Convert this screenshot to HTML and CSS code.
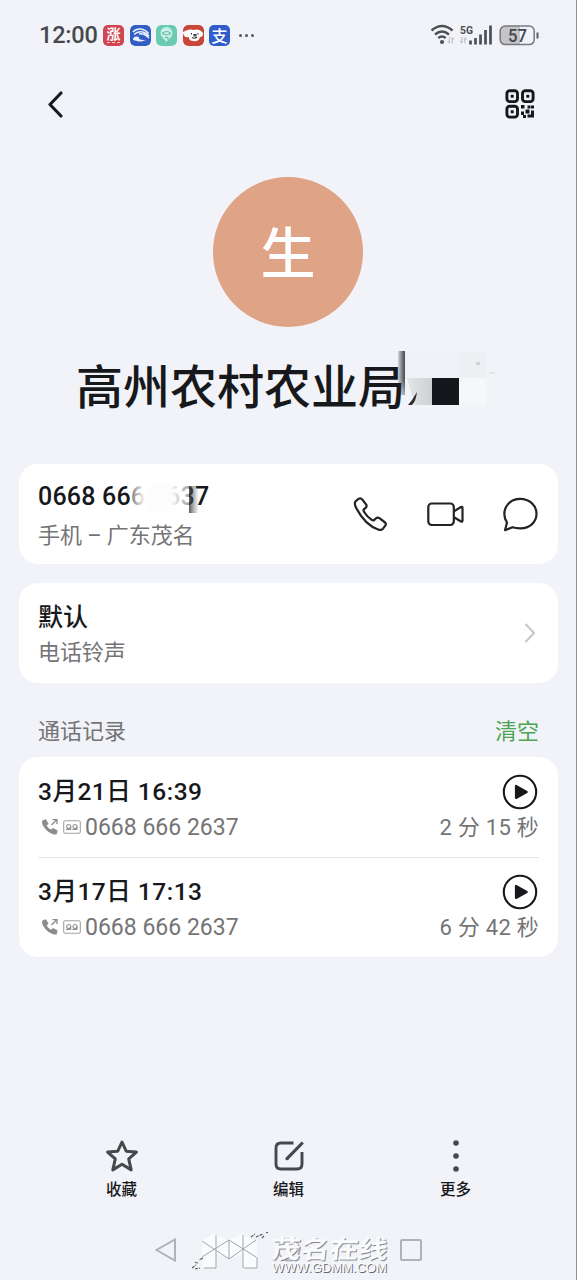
FILE: index.html
```html
<!DOCTYPE html>
<html lang="zh-CN">
<head>
<meta charset="utf-8">
<title>联系人</title>
<link rel="stylesheet" href="styles.css">
</head>
<body>
<svg class="defs" width="0" height="0">
  <symbol id="play" viewBox="0 0 36 36"><circle cx="18" cy="18" r="16.2" fill="none" stroke="#17181b" stroke-width="2.100"/><path d="M14 12v12L24.700 18z" fill="#17181b" stroke="#17181b" stroke-width="2.200" stroke-linejoin="round"/></symbol>
  <symbol id="outgoing" viewBox="0 0 18 18"><path d="M1.500 2.200 5 1.300l2.500 4.400-1.800 1.800c1 1.900 2.500 3.300 4.500 4.100l1.900-1.700 4.500 2.700-.8 3.400c-1 .9-3.800.8-6.800-1.200C5.300 12.400 1.800 8.600 1 4.700z" fill="#8c8c8e"/><path d="m10.500 7 5-5M11.500 1.700H16v4.400" fill="none" stroke="#8c8c8e" stroke-width="1.300"/></symbol>
  <symbol id="voicemail" viewBox="0 0 18 14"><rect x=".7" y=".7" width="16.600" height="12.600" rx="1.500" fill="none" stroke="#a2a2a4" stroke-width="1.100"/><g fill="none" stroke="#929294" stroke-width="1.100"><circle cx="5.700" cy="6.500" r="2"/><circle cx="12" cy="6.500" r="2"/><path d="M3 9.500h4.700V6.500M14 6.500v3h-4.700"/></g></symbol>
</svg>
<main class="screen">
  <header class="status">
    <span class="clock">12:00</span>
    <div class="apps">
      <span class="app red">涨<i></i></span>
      <svg class="app" viewBox="0 0 21 21"><rect width="21" height="21" rx="5" fill="#315dc5"/><path d="M3 7C7 2.500 14 3 18.500 8.500M4 9.500c4-4 10-4 15 1.500M9 9c4-1 7 1 10 4" fill="none" stroke="#e8f2ff" stroke-width="1.500"/><path d="M3 15q0-4 4-3.500 3 .5 2 2.500 3 1.500 7 1-5 2.500-9 1z" fill="#e8f2ff"/></svg>
      <svg class="app" viewBox="0 0 21 21"><rect width="21" height="21" rx="5" fill="#6bcbb2"/><path d="M10.500 17 6 12a6 6 0 1 1 9 0z" fill="#c9f0e5"/><path d="M6 8.500q4.500-4 9 0-4.500 3-9 0M9 12.500h3v3" fill="none" stroke="#5db9a1" stroke-width="1"/></svg>
      <svg class="app" viewBox="0 0 21 21"><rect width="21" height="21" rx="5" fill="#c94537"/><path d="M0 7C4 5 6 4 10 5c4-1 7-1 10 3 0 3-1 4-3 4-1 4-4 5-7 4-4 0-4-3-4-4-3 1-5 0-6-4z" fill="#fff"/><path d="M8.500 8v1.500M15 8v1.500M11 9.500h2V11h-2zM9 12.500q2.500 1.500 5-.2" fill="none" stroke="#333" stroke-width="1.100"/></svg>
      <span class="app blue">支</span>
      <span class="dots"><i></i><i></i><i></i></span>
    </div>
    <svg class="signal" width="112" height="26" viewBox="0 0 112 26">
      <g fill="none" stroke="#4d4f53" stroke-width="2.400"><path d="M3.500 8.500Q14-.5 24.500 8.500M7 12.500Q14 6.500 21 12.500M10.300 16q3.700-3 7.400 0"/></g><circle cx="14" cy="20" r="2.100" fill="#4d4f53"/>
      <path d="M21.500 15v6m0 0-1.700-2m4.500-3.500v6m0-6 1.600 2M34 15v6m0 0-1.700-2m4.500-3.500v6m0-6 1.600 2" fill="none" stroke="#c0c1c4" stroke-width="1.200"/>
      <text x="32" y="12" class="five" textLength="13" lengthAdjust="spacingAndGlyphs">5G</text>
      <path d="M42.500 22.500v-4M47.500 22.500v-6.500M52.500 22.500V12.500M57.500 22.500V8M62.500 22.500V3.500" stroke="#4d4f53" stroke-width="2.700"/>
      <rect x="72.200" y="4" width="34" height="18.600" rx="5" fill="#f1f3f8"/><path d="M77 4h15v18.600H77a5 5 0 0 1-5-5V9a5 5 0 0 1 5-5z" fill="#c3c5c9"/><rect x="72.200" y="4" width="34" height="18.600" rx="5" fill="none" stroke="#77797d" stroke-width="1.500"/><path d="M109.500 10.500v6" stroke="#5b5d61" stroke-width="2"/>
      <text x="80" y="19.700" class="charge" textLength="19" lengthAdjust="spacingAndGlyphs">57</text>
    </svg>
  </header>
  <nav class="topbar">
    <svg width="18" height="28" viewBox="0 0 18 28"><path d="M15 3 4 14.500l11 11.500" fill="none" stroke="#17181b" stroke-width="3.100" stroke-linecap="round" stroke-linejoin="round"/></svg>
    <svg width="30" height="30" viewBox="0 0 30 30"><g fill="none" stroke="#17181b" stroke-width="2.900"><rect x="1.900" y="1.800" width="10.600" height="10.800" rx="2.800"/><rect x="17.500" y="1.800" width="10.600" height="10.800" rx="2.800"/><rect x="1.900" y="17.300" width="10.600" height="10.800" rx="2.800"/></g><path d="M5.700 5.700h3v3h-3zM21.300 5.700h3v3h-3zM5.700 21.200h3v3h-3zM16 16h3.500v3.500H16zM20.500 20.500h4v4h-4zM26 16.500h3v3h-3zM16 22.500h3V26h-3zM22.500 16.500h3v3h-3zM26 21.500h3v7h-6.500v-3H26zM18 26h3v3h-3z" fill="#17181b"/></svg>
  </nav>
  <div class="avatar">生</div>
  <h1 class="name"><span>高州农村农业局</span><svg class="mosaic" width="98" height="58" viewBox="0 0 98 58"><defs><linearGradient id="edge"><stop stop-color="#17181b" stop-opacity="0"/><stop offset="1" stop-color="#45474a"/></linearGradient><linearGradient id="edgefade" x2="0" y2="1"><stop stop-color="#fff"/><stop offset=".5" stop-color="#fff"/><stop offset="1" stop-color="#fff" stop-opacity="0"/></linearGradient><mask id="fade"><rect width="98" height="58" fill="url(#edgefade)"/></mask><linearGradient id="patch"><stop stop-color="#e3e4e8"/><stop offset="1" stop-color="#cfd0d4"/></linearGradient></defs>
    <rect x="-1" y="1" width="8" height="44" fill="url(#edge)" mask="url(#fade)"/><path d="M7 1h54v27H7z" fill="#f0f1f6"/><path d="M9 28h25v27H17z" fill="url(#patch)"/><path d="m10 55 4-5 5-8q-1 9-5 13z" fill="#2c2e32"/><path d="M34 28h27v27H34z" fill="#14171c"/><path d="M61 2h27v26H61z" fill="#eeeff3"/><path d="M61 28h27v27H61z" fill="#f6f7f9"/><path d="M78 12h4v3h-4z" fill="#ced0d4"/><path d="M91 22h6v2h-6z" fill="#e4e5e9"/></svg></h1>
  <section class="card phone">
    <div class="info"><div class="number">0668 666 2637<svg class="veil" width="76" height="30" viewBox="0 0 76 30"><defs><linearGradient id="white"><stop stop-color="#fff" stop-opacity=".45"/><stop offset=".2" stop-color="#fff" stop-opacity=".9"/><stop offset=".32" stop-color="#fdfdfd"/><stop offset=".68" stop-color="#fdfdfd"/><stop offset="1" stop-color="#fff" stop-opacity=".6"/></linearGradient><linearGradient id="shade"><stop stop-color="#3c3c3c" stop-opacity=".85"/><stop offset="1" stop-color="#777" stop-opacity=".1"/></linearGradient></defs><path d="M0 0h58v30H0z" fill="url(#white)"/><path d="M58 3h9v27h-9z" fill="url(#shade)"/></svg></div><div class="sub">手机 – 广东茂名</div></div>
    <div class="actions">
      <svg width="36" height="36" viewBox="0 0 36 36"><path d="M3.500 5.300 6.800 2.700q2-1 3.400.7l4 5.200q1 1.800-.6 3.200l-1.800 1.600q-.7 1 .2 2.300 3 5 7.800 8.200 1.500 1 2.500 0l1.700-1.600q1.700-1.300 3.400-.1l5.100 3.800q2 1.500 1 3.300l-2.500 3.400q-1.600 1.700-4.300 1.100Q13 29 4.200 11.900 1.900 7.700 3.500 5.300z"/></svg>
      <svg width="38" height="26" viewBox="0 0 38 26"><rect x="2.300" y="2.500" width="25.500" height="21.500" rx="3.500"/><path d="m28 10.300 7-4.300q1.500-.5 1.500 1v12.500q0 1.500-1.500 1l-7-4.300"/></svg>
      <svg width="36" height="36" viewBox="0 0 36 36"><path d="M5 26.500C-1.500 16 5 3 18 2.800c9.500 0 16.500 6.500 16.500 15S27.500 32.500 18 32.300c-3.500 0-5-.2-7.500-1.100L3 34.200z"/></svg>
    </div>
  </section>
  <section class="card ring">
    <div class="info"><div class="title">默认</div><div class="sub">电话铃声</div></div>
    <svg width="12" height="20" viewBox="0 0 12 20"><path d="m2 1.500 8 8.500-8 8.500" fill="none" stroke="#c7c7c9" stroke-width="2" stroke-linecap="round" stroke-linejoin="round"/></svg>
  </section>
  <div class="section-head"><span>通话记录</span><span class="clear">清空</span></div>
  <section class="card log">
    <div class="entry">
      <div class="line"><span class="date">3月21日 16:39</span><svg class="play"><use href="#play"/></svg></div>
      <div class="line detail"><span class="call"><svg class="out"><use href="#outgoing"/></svg><svg class="vm"><use href="#voicemail"/></svg>0668 666 2637</span><span class="time">2 分 15 秒</span></div>
    </div>
    <div class="entry">
      <div class="line"><span class="date">3月17日 17:13</span><svg class="play"><use href="#play"/></svg></div>
      <div class="line detail"><span class="call"><svg class="out"><use href="#outgoing"/></svg><svg class="vm"><use href="#voicemail"/></svg>0668 666 2637</span><span class="time">6 分 42 秒</span></div>
    </div>
  </section>
  <div class="tools">
    <div class="tool"><svg width="34" height="34" viewBox="0 0 34 34"><path d="m17 3 4.200 9.200 10.200.9-7.700 6.800 2.500 11L17 25.300 7.800 30.900l2.500-11-7.700-6.800 10.200-.9z" fill="none" stroke="#46484c" stroke-width="3" stroke-linejoin="round"/></svg><span>收藏</span></div>
    <div class="tool"><svg width="34" height="34" viewBox="0 0 34 34"><path d="M21.500 4H9Q4 4 4 9v16q0 5 5 5h16q5 0 5-5V13" fill="none" stroke="#46484c" stroke-width="2.900"/><path d="m30.800 3.500-16 16.300" stroke="#46484c" stroke-width="3.200"/><circle cx="15" cy="19.700" r="1.600" fill="#46484c"/></svg><span>编辑</span></div>
    <div class="tool"><svg width="34" height="34" viewBox="0 0 34 34" fill="#46484c"><circle cx="17" cy="4" r="2.800"/><circle cx="17" cy="17" r="2.800"/><circle cx="17" cy="30" r="2.800"/></svg><span>更多</span></div>
  </div>
  <footer class="system">
    <svg width="22" height="24" viewBox="0 0 22 24"><path d="M20 1.500v21L1.500 12z"/></svg>
    <svg width="24" height="24" viewBox="0 0 24 24"><circle cx="12" cy="12" r="10.500"/></svg>
    <svg width="22" height="22" viewBox="0 0 22 22"><rect x="1" y="1" width="20" height="20" rx="1"/></svg>
    <div class="watermark">
      <svg width="80" height="42" viewBox="0 0 80 42"><path d="m12 8 12-6 14 7 14-7 15 8v26H53V22l-14 5-13-5v14H12z" fill="#fafbfc"/><path d="m12 9 27 18 27-19M12 25l27-17 27 17M26 3v33M53 3v33M39 8v19M14 36h12M54 36h13V25" fill="none" stroke="#a4a5a8" stroke-width="1"/><path d="m2 36 4-3m-1 4 5-1m-2-5-4-1m9-4-4 2M61 5l4-3m1 3 7-3m-1 4 2-2m2-3 2-1" stroke="#5a5b5e" stroke-width="1.200" stroke-dasharray="3 1"/></svg>
      <div class="brand"><b>茂名在线</b><small>WWW.GDMM.COM</small></div>
    </div>
  </footer>
</main>
</body>
</html>
```
FILE: styles.css
```css
* { box-sizing: border-box; }
body { margin: 0; background: #f1f3f8; font-family: Roboto, "Noto Sans CJK SC", sans-serif; color: #17181b; }
.defs { position: absolute; }
svg { display: block; flex: none; }
.screen { width: 577px; height: 1280px; overflow: hidden; border-right: 1px solid #929397; white-space: nowrap; display: flex; flex-direction: column; }
.screen > * { flex: none; }
.status { height: 70px; padding: 0 36px 0 39px; display: flex; align-items: center; }
.clock { font-size: 23.500px; font-weight: 500; color: #46484c; width: 64px; letter-spacing: -.2px; }
.apps { display: flex; gap: 5.500px; align-items: center; flex: 1; }
.app { width: 21px; height: 21px; border-radius: 5px; }
span.app { color: #fff; font: 500 16px/20px "Noto Sans CJK SC", sans-serif; text-align: center; }
.red { background: #d14450; }
span.red { font-size: 14px; line-height: 17px; font-weight: 700; }
.red i { display: block; width: 13px; margin: 0 auto; border-top: 1px dashed #f6c7ca; }
.blue { background: #315dcc; }
.dots { display: flex; gap: 3px; margin-left: 3px; }
.dots i { width: 3px; height: 3px; border-radius: 50%; background: #55575a; }
.five { font: 700 11.500px Roboto, sans-serif; fill: #4d4f53; }
.charge { font: 500 18px Roboto, sans-serif; fill: #46484c; }
.topbar { height: 68px; padding: 0 41px 0 46px; display: flex; align-items: center; justify-content: space-between; }
.avatar { width: 150px; height: 150px; margin: 39px 0 0 213px; border-radius: 50%; background: #dfa386; color: #fff; font: 500 55px/144px "Noto Sans CJK SC", sans-serif; text-align: center; }
.name { position: relative; margin: 23px 0 0 76px; height: 70px; font: 500 47px/67px "Noto Sans CJK SC", sans-serif; }
.mosaic { position: absolute; left: 322px; top: 0; }
.card { margin: 0 18px 0 19px; background: #fff; border-radius: 19px; }
.phone { margin-top: 44px; height: 100px; padding: 0 20px 0 19px; display: flex; justify-content: space-between; align-items: center; }
.info { height: 100px; padding-top: 16px; }
.number { position: relative; font-size: 25px; font-weight: 500; line-height: 34px; letter-spacing: .2px; }
.veil { position: absolute; left: 93px; top: 3px; }
.sub { font-size: 22px; line-height: 34px; color: #747476; margin-top: 5px; letter-spacing: -.1px; }
.actions { display: flex; gap: 38px; align-items: center; }
.actions svg { fill: none; stroke: #222326; stroke-width: 2.200; stroke-linejoin: round; }
.ring { margin-top: 19px; height: 100px; padding: 0 22px 0 19px; display: flex; justify-content: space-between; align-items: center; }
.title { font-size: 25px; font-weight: 500; line-height: 38px; }
.ring .sub { margin-top: -1px; }
.section-head { height: 74px; padding: 21px 37px 0 38px; display: flex; justify-content: space-between; font-size: 22px; line-height: 56px; color: #747476; }
.section-head .clear { color: #4da454; }
.log { height: 200px; padding: 0 19px; }
.entry { height: 100px; padding-top: 17px; }
.entry + .entry { border-top: 1px solid #e5e5e7; padding-top: 16px; }
.line { display: flex; align-items: center; justify-content: space-between; height: 36px; font-size: 24.500px; }
.date { font-weight: 500; letter-spacing: .5px; padding-bottom: 5px; }
.play { width: 36px; height: 36px; margin-right: 1px; }
.detail { height: 34px; font-size: 23px; color: #747476; }
.call { display: flex; align-items: center; }
.out { width: 18px; height: 18px; margin: 0 4px 0 3px; }
.vm { width: 18px; height: 14px; margin-right: 4px; }
.time { font-size: 22px; letter-spacing: .25px; padding-bottom: 4px; }
.tools { margin-top: 182px; padding: 0 37px 0 38px; display: flex; height: 64px; }
.tool { flex: 1; display: flex; flex-direction: column; align-items: center; font: 500 15.500px/24px "Noto Sans CJK SC", sans-serif; }
.tool span { margin-top: 3px; }
.system { position: relative; margin: 24px 0 0 155px; width: 267px; height: 46px; display: flex; align-items: center; justify-content: space-between; fill: none; stroke: #b1b2b6; stroke-width: 2; }
.watermark { position: absolute; left: 35px; top: 5px; display: flex; stroke: none; }
.brand { width: 118px; margin-left: 2px; padding-top: 2px; color: #fafbfc; text-shadow: 1px 1px 0 #88898c; }
.brand b { display: block; font: 700 29px/27px "Noto Sans CJK SC", sans-serif; transform: skewX(-6deg) scaleY(.86); }
.brand small { display: block; font: 13px/13px "Liberation Sans", sans-serif; text-shadow: 1px 1px 0 #66676a; }
```
